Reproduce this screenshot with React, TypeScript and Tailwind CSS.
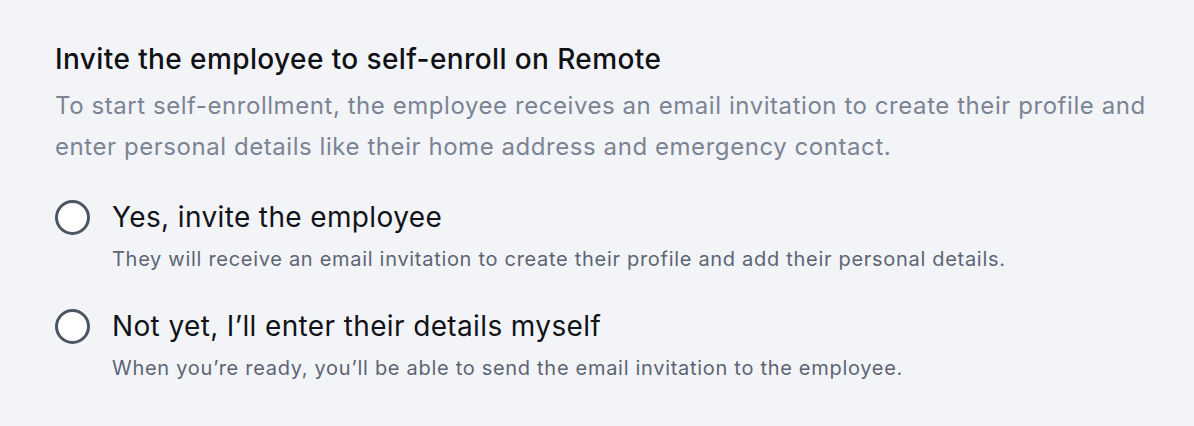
import React, { useState } from 'react';

const options = [
  {
    id: 'yes',
    label: 'Yes, invite the employee',
    hint: 'They will receive an email invitation to create their profile and add their personal details.',
  },
  {
    id: 'later',
    label: 'Not yet, I’ll enter their details myself',
    hint: 'When you’re ready, you’ll be able to send the email invitation to the employee.',
  },
];

export default function App() {
  const [selected, setSelected] = useState<string | null>(null);

  return (
    <div
      className="min-h-[426px] w-full bg-[#f3f4f8] pl-[55px] pr-[30px] pt-[40px] text-[#0f1115] [font-optical-sizing:none]"
      style={{ fontFamily: 'Inter, "Noto Sans", sans-serif' }}
    >
      <h2 className="text-[28px] font-medium leading-[38px] tracking-[0.4px]">
        Invite the employee to self-enroll on Remote
      </h2>
      <p className="mt-[7px] text-[24px] leading-[41px] tracking-[0.56px] text-[#7b8494]">
        To start self-enrollment, the employee receives an email invitation to create their profile and
        enter personal details like their home address and emergency contact.
      </p>

      <div className="mt-[30px] flex flex-col gap-[33px]">
        {options.map((opt) => (
          <label key={opt.id} className="flex cursor-pointer items-start gap-[22px]">
            <input
              type="radio"
              name="invite"
              className="sr-only"
              checked={selected === opt.id}
              onChange={() => setSelected(opt.id)}
            />
            <span className="mt-[3px] flex h-[35px] w-[35px] shrink-0 items-center justify-center rounded-full border-[3px] border-[#4b5563] bg-white">
              {selected === opt.id && <span className="h-3.5 w-3.5 rounded-full bg-[#4b5563]" />}
            </span>
            <span className="flex flex-col">
              <span className="text-[28px] leading-[40px] tracking-[0.37px] text-[#111318]">{opt.label}</span>
              <span className="mt-[8px] text-[20px] leading-[28px] tracking-[0.7px] text-[#5c6474]">{opt.hint}</span>
            </span>
          </label>
        ))}
      </div>
    </div>
  );
}
